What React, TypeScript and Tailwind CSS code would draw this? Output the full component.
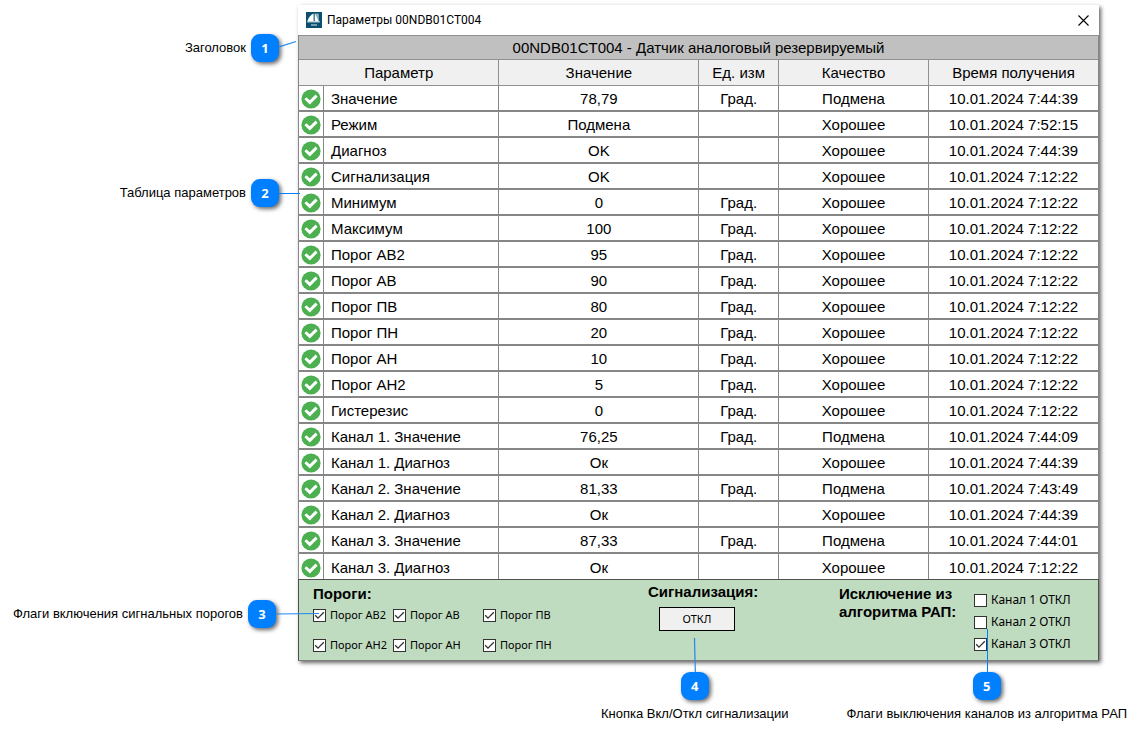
import { useState } from "react";
import type { ReactNode } from "react";

type Row = {
  name: string;
  value: string;
  unit?: string;
  quality: string;
  time: string;
};

const ROWS: Row[] = [
  { name: "Значение", value: "78,79", unit: "Град.", quality: "Подмена", time: "10.01.2024 7:44:39" },
  { name: "Режим", value: "Подмена", quality: "Хорошее", time: "10.01.2024 7:52:15" },
  { name: "Диагноз", value: "OK", quality: "Хорошее", time: "10.01.2024 7:44:39" },
  { name: "Сигнализация", value: "OK", quality: "Хорошее", time: "10.01.2024 7:12:22" },
  { name: "Минимум", value: "0", unit: "Град.", quality: "Хорошее", time: "10.01.2024 7:12:22" },
  { name: "Максимум", value: "100", unit: "Град.", quality: "Хорошее", time: "10.01.2024 7:12:22" },
  { name: "Порог АВ2", value: "95", unit: "Град.", quality: "Хорошее", time: "10.01.2024 7:12:22" },
  { name: "Порог АВ", value: "90", unit: "Град.", quality: "Хорошее", time: "10.01.2024 7:12:22" },
  { name: "Порог ПВ", value: "80", unit: "Град.", quality: "Хорошее", time: "10.01.2024 7:12:22" },
  { name: "Порог ПН", value: "20", unit: "Град.", quality: "Хорошее", time: "10.01.2024 7:12:22" },
  { name: "Порог АН", value: "10", unit: "Град.", quality: "Хорошее", time: "10.01.2024 7:12:22" },
  { name: "Порог АН2", value: "5", unit: "Град.", quality: "Хорошее", time: "10.01.2024 7:12:22" },
  { name: "Гистерезис", value: "0", unit: "Град.", quality: "Хорошее", time: "10.01.2024 7:12:22" },
  { name: "Канал 1. Значение", value: "76,25", unit: "Град.", quality: "Подмена", time: "10.01.2024 7:44:09" },
  { name: "Канал 1. Диагноз", value: "Ок", quality: "Хорошее", time: "10.01.2024 7:44:39" },
  { name: "Канал 2. Значение", value: "81,33", unit: "Град.", quality: "Подмена", time: "10.01.2024 7:43:49" },
  { name: "Канал 2. Диагноз", value: "Ок", quality: "Хорошее", time: "10.01.2024 7:44:39" },
  { name: "Канал 3. Значение", value: "87,33", unit: "Град.", quality: "Подмена", time: "10.01.2024 7:44:01" },
  { name: "Канал 3. Диагноз", value: "Ок", quality: "Хорошее", time: "10.01.2024 7:12:22" },
];

const THRESHOLDS = ["Порог АВ2", "Порог АВ", "Порог ПВ", "Порог АН2", "Порог АН", "Порог ПН"];

const StatusOk = () => (
  <svg viewBox="0 0 20 20" className="mx-auto block size-5" role="img" aria-label="OK">
    <circle cx="10" cy="10" r="9.6" fill="#4caf50" />
    <path d="M4.4 9.2 8.8 13.4 15.6 6.6" fill="none" stroke="#fff" strokeWidth="2.9" />
  </svg>
);

const AppLogo = () => (
  <svg viewBox="0 0 16 16" className="size-4" aria-hidden="true">
    <rect width="16" height="16" fill="#0b4f6f" />
    <path d="M7.6 1.6V9.4H1.3C2.4 5.8 4.6 3 7.6 1.6Z" fill="#fff" />
    <path d="M8.8 1.6H12.8V9.4H8.8Z" fill="#8fb3c4" />
    <path d="M8.8 1.6 12.8 9.4H8.8Z" fill="#fff" />
    <path d="M1.3 9.2H13.8V10.4H1.3Z" fill="#d5e3ea" />
    <path d="M5 13H11" stroke="#8fb3c4" strokeWidth="1.6" />
  </svg>
);

type CheckProps = { label: string; checked?: boolean; className: string };

const Check = ({ label, checked, className }: CheckProps) => (
  <label className={`flex items-center gap-1 whitespace-nowrap ${className}`}>
    <span className="grid shrink-0">
      <input
        type="checkbox"
        defaultChecked={checked}
        className="peer col-start-1 row-start-1 size-[13px] appearance-none border border-[#333] bg-white"
      />
      <svg
        viewBox="0 0 13 13"
        className="pointer-events-none invisible col-start-1 row-start-1 size-[13px] peer-checked:visible"
      >
        <path d="M2.2 6.3 5 9.1 10.8 3.3" fill="none" stroke="#333" strokeWidth="1.3" />
      </svg>
    </span>
    {label}
  </label>
);

// Numbered marker; children hold the leader line that runs from it.
const Badge = ({ n, children }: { n: number; children: ReactNode }) => (
  <span className="relative block size-7 shrink-0">
    <span className="flex size-7 items-center justify-center rounded-[9px] bg-[#007fff] font-['Open_Sans',sans-serif] text-[13px] font-bold text-white shadow-[2px_2px_4px_rgba(0,0,0,0.6)]">
      {n}
    </span>
    {children}
  </span>
);

const ParamTable = () => (
  <table className="w-full table-fixed border-separate border-spacing-0 text-center text-[15px] leading-[22px]">
    <colgroup>
      <col className="w-6" />
      <col />
      <col className="w-1/4" />
      <col className="w-1/10" />
      <col className="w-3/16" />
      <col className="w-[170px]" />
    </colgroup>
    <thead>
      <tr className="h-[25px] bg-[#c0c0c0]">
        <th colSpan={6} className="border-y border-[#909090] p-0 font-normal">
          00NDB01CT004 - Датчик аналоговый резервируемый
        </th>
      </tr>
      <tr className="h-[26px] bg-[#f0f0f0] *:border-r *:border-b *:border-[#909090] *:p-0 *:font-normal last:*:border-r-0">
        <th colSpan={2}>Параметр</th>
        <th className="border-l">Значение</th>
        <th className="border-l">Ед. изм</th>
        <th className="border-l">Качество</th>
        <th className="border-l">Время получения</th>
      </tr>
    </thead>
    <tbody>
      {ROWS.map((row) => (
        <tr
          key={row.name}
          className="h-[26px] *:border-b-2 *:border-[#868686] *:px-0 *:pt-[2px] *:pb-0 last:h-[25px] last:*:border-b-0"
        >
          <td>
            <StatusOk />
          </td>
          <td className="border-l text-left">
            <span className="pl-[7px]">{row.name}</span>
          </td>
          <td className="border-l">{row.value}</td>
          <td className="border-l">{row.unit}</td>
          <td className="border-l">{row.quality}</td>
          <td className="border-l">{row.time}</td>
        </tr>
      ))}
    </tbody>
  </table>
);

const ControlPanel = () => {
  const [alarmOff, setAlarmOff] = useState(true);

  return (
    <section className="flex items-start border border-[#505050] border-b-[#808080] bg-[#c0dcc0] pr-[26px] pb-[5px] pl-[14px]">
      <div className="flex-1 pt-[5px]">
        <h3 className="text-[15px] leading-[18px] font-bold">Пороги:</h3>
        <div className="mt-1 grid grid-cols-[80px_90px_80px] gap-y-[14px] font-['Noto_Sans',sans-serif] text-[11px] leading-4">
          {THRESHOLDS.map((label) => (
            <Check key={label} label={label} checked className="h-4" />
          ))}
        </div>
      </div>
      <div className="w-[108px] pt-[3px] whitespace-nowrap">
        <h3 className="text-[15px] leading-[18px] font-bold">Сигнализация:</h3>
        <button
          type="button"
          onClick={() => setAlarmOff(!alarmOff)}
          className="mt-[6px] ml-[11px] block h-6 w-[76px] border border-black bg-[#f0f0f0] font-['Noto_Sans',sans-serif] text-[11px] leading-[22px]"
        >
          {alarmOff ? "ОТКЛ" : "ВКЛ"}
        </button>
      </div>
      <div className="ml-[83px] flex">
        <h3 className="w-[135px] pt-[5px] text-[15px] leading-[18px] font-bold">
          Исключение из
          <br /> алгоритма РАП:
        </h3>
        <div className="flex w-[98px] flex-col pt-[9px] font-['Noto_Sans',sans-serif] text-[12px] leading-[22px]">
          <Check label="Канал 1 ОТКЛ" className="h-[22px]" />
          <Check label="Канал 2 ОТКЛ" className="h-[22px]" />
          <Check label="Канал 3 ОТКЛ" checked className="h-[22px]" />
        </div>
      </div>
    </section>
  );
};

const App = () => (
  <main className="bg-white font-['Liberation_Sans',Arial,sans-serif] text-[13px] leading-4 text-black">
    <div className="grid grid-cols-[298px_1fr] pt-[5px] pr-11">
      <div className="relative z-10 flex flex-col items-end pr-[19px]">
        <div className="mt-[29px] flex items-center gap-[5px]">
          Заголовок
          <Badge n={1}>
            <svg className="absolute top-1 left-7 h-4 w-5" aria-hidden="true">
              <path d="M0 9 17 3.5" stroke="#1e88f0" strokeWidth="1.2" />
            </svg>
          </Badge>
        </div>
        <div className="mt-[117px] flex items-center gap-[5px]">
          Таблица параметров
          <Badge n={2}>
            <svg className="absolute top-3 left-7 h-4 w-6" aria-hidden="true">
              <path d="M0 2.5H21" stroke="#007fff" strokeWidth="1" />
            </svg>
          </Badge>
        </div>
        <div className="mt-[393px] mr-[3px] flex items-center gap-[5px]">
          Флаги включения сигнальных порогов
          <Badge n={3}>
            <svg className="absolute top-2 left-7 h-4 w-12" aria-hidden="true">
              <path d="M0 6 43 5.5" stroke="#1e88f0" strokeWidth="1.2" />
            </svg>
          </Badge>
        </div>
      </div>

      <div className="self-start bg-white shadow-[2px_2px_4px_rgba(0,0,0,0.6)]">
        <header className="flex h-[30px] items-center gap-[5px] px-2 font-['Roboto',sans-serif] text-[12px]">
          <AppLogo />
          <h1>Параметры 00NDB01CT004</h1>
          <button type="button" aria-label="Закрыть" className="ml-auto p-[2px]">
            <svg viewBox="0 0 11 11" className="size-[11px]">
              <path d="M.5 .5 10.5 10.5M10.5 .5 .5 10.5" stroke="#000" strokeWidth="1.1" />
            </svg>
          </button>
        </header>
        <div className="border-x border-[#868686]">
          <ParamTable />
        </div>
        <ControlPanel />
      </div>
    </div>

    <div className="relative flex justify-end gap-[58px] pt-[11px] pr-4">
      <div className="flex flex-col items-center gap-[6px]">
        <Badge n={4}>
          <svg className="absolute bottom-7 left-2 h-9 w-3" aria-hidden="true">
            <path d="M5.5 2 6.3 36" stroke="#1e88f0" strokeWidth="1.2" />
          </svg>
        </Badge>
        Кнопка Вкл/Откл сигнализации
      </div>
      <div className="flex flex-col items-center gap-[6px]">
        <Badge n={5}>
          <svg className="absolute bottom-7 left-2 h-11 w-3" aria-hidden="true">
            <path d="M6.5 1V44" stroke="#007fff" strokeWidth="1" />
          </svg>
        </Badge>
        Флаги выключения каналов из алгоритма РАП
      </div>
    </div>
  </main>
);

export default App;
